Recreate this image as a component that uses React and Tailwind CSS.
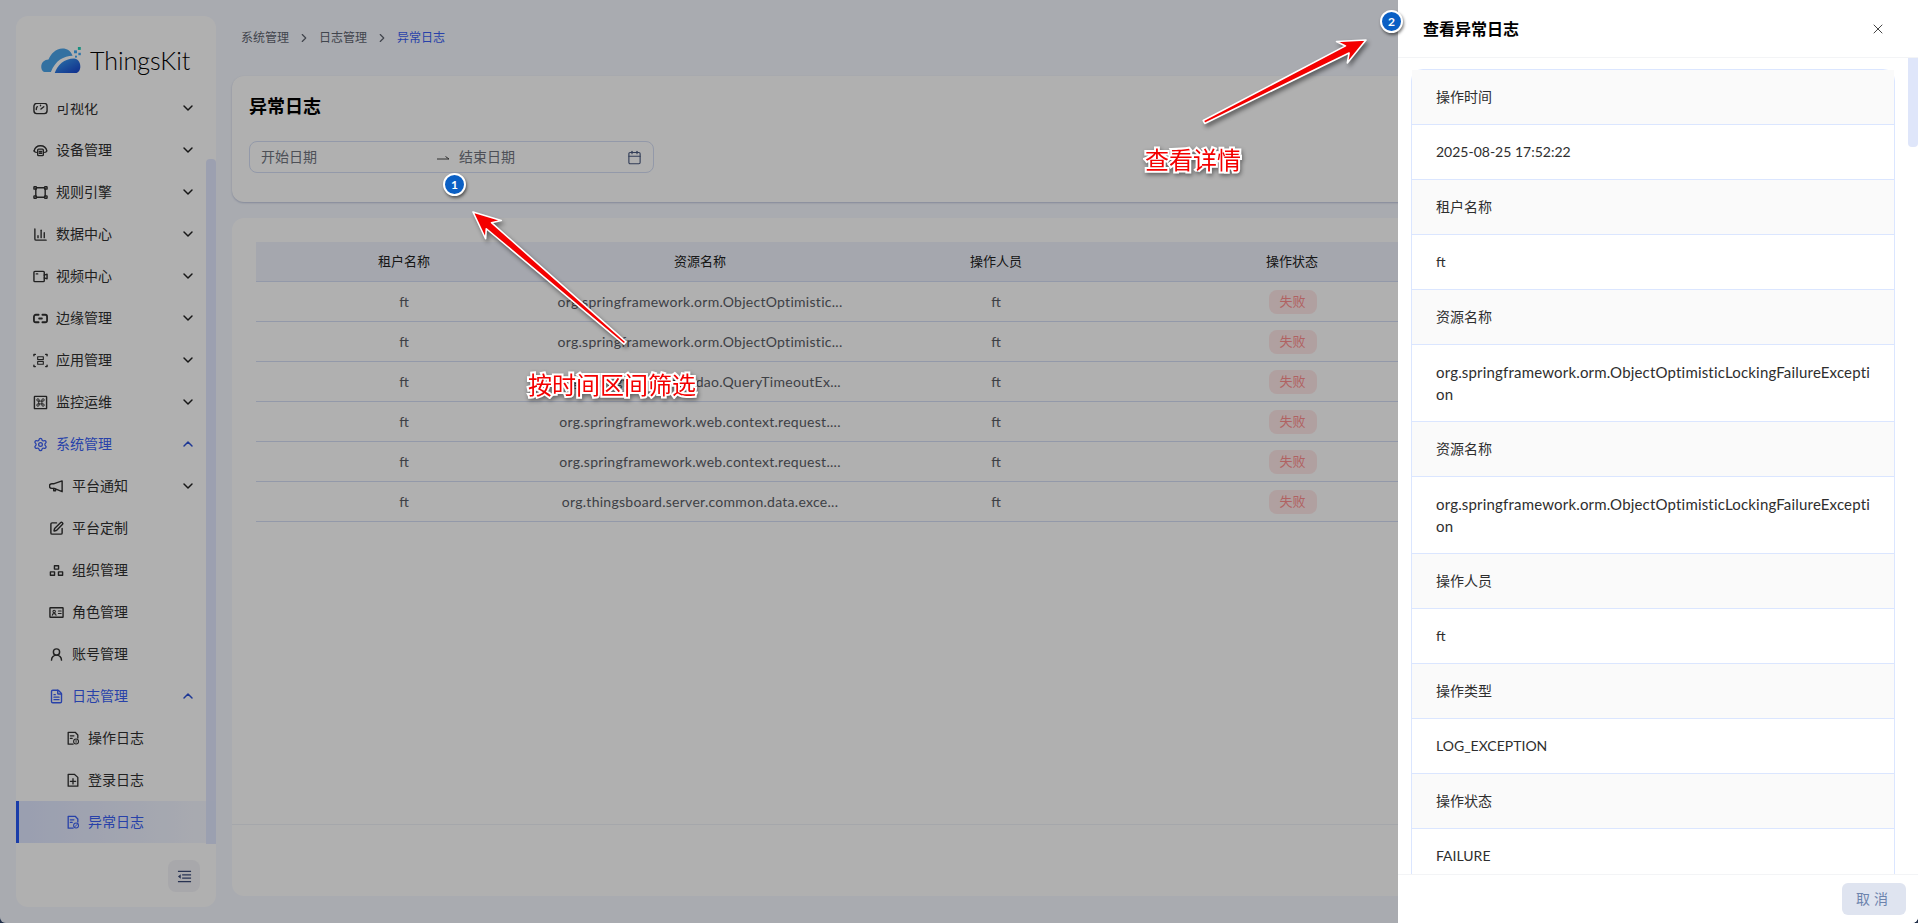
import { ChevronDown, ChevronUp, ChevronRight, Settings, SquarePen, UserRound, FileText, Calendar, X, ChartColumn } from 'lucide-react'

const FONT = "font-['Lato','Noto_Sans_CJK_SC',sans-serif]"

const Svg = ({ children, className = 'w-[15px] h-[15px]' }) => (
  <svg viewBox="0 0 16 16" fill="none" stroke="currentColor" strokeWidth="1.5" strokeLinecap="round" strokeLinejoin="round" className={className}>
    {children}
  </svg>
)

const IconGauge = () => (
  <Svg>
    <path d="M4 2.500h8a3 3 0 0 1 3 3v5a3 3 0 0 1-3 3H4a3 3 0 0 1-3-3v-5a3 3 0 0 1 3-3z" />
    <path d="M3.500 9a4.500 4.500 0 0 1 1-3M8 4.500v.6M11.500 6.200 8.500 8.600" />
  </Svg>
)
const IconDevice = () => (
  <Svg>
    <path d="M1.200 8.500C2 5 4.800 3 8 3s6 2 6.800 5.500c-.5 1-1.400 1.500-2.300 1.500" />
    <path d="M1.200 8.500c.5 1 1.400 1.500 2.300 1.500" />
    <rect x="5" y="6.500" width="6" height="7" rx="1" />
    <path d="M6.800 9h2.400M6.800 11h2.400" />
  </Svg>
)
const IconRule = () => (
  <Svg>
    <path d="M4 3h8M4 13h8M3 4v8M13 4v8" />
    <rect x="1" y="1.800" width="2.600" height="2.600" rx=".5" />
    <rect x="12.400" y="1.800" width="2.600" height="2.600" rx=".5" />
    <rect x="1" y="11.600" width="2.600" height="2.600" rx=".5" />
    <rect x="12.400" y="11.600" width="2.600" height="2.600" rx=".5" />
  </Svg>
)
const IconVideo = () => (
  <Svg>
    <rect x="1" y="2.500" width="11" height="11" rx="1" />
    <path d="M12 6.500 15 5.500v5L12 9.500M3.500 5.200h1.500" />
  </Svg>
)
const IconEdge = () => (
  <Svg>
    <path d="M6 4H3a2 2 0 0 0-2 2v4a2 2 0 0 0 2 2h3M10 4h3a2 2 0 0 1 2 2v4a2 2 0 0 1-2 2h-3M6.500 8h3" strokeWidth="1.900" />
  </Svg>
)
const IconApp = () => (
  <Svg>
    <path d="M1 3V1.500h1.500M13.500 1.500H15V3M15 13v1.500h-1.500M2.500 14.500H1V13" />
    <path d="M5 4h6v3H5zM5 9h6v3H5z" strokeWidth="1.200" />
  </Svg>
)
const IconMonitor = () => (
  <Svg>
    <rect x="1.500" y="1.500" width="13" height="13" rx=".5" />
    <path d="M6.500 6.500h3v3h-3zM6.500 6.500V5.250A1.250 1.250 0 1 0 5.250 6.500H6.500M9.500 6.500V5.250a1.250 1.250 0 1 1 1.250 1.250H9.500M6.500 9.500v1.250A1.250 1.250 0 1 1 5.250 9.500H6.500M9.500 9.500v1.250a1.250 1.250 0 1 0 1.250-1.250H9.500" strokeWidth="1" />
  </Svg>
)
const IconNotice = () => (
  <Svg>
    <path d="M14 2 5.500 5H3a2 2 0 0 0 0 5h2.500L14 13.500z" />
    <path d="M5 10v2.500h2V11" />
  </Svg>
)
const IconOrg = () => (
  <Svg>
    <rect x="5.800" y="3" width="4.400" height="3.500" />
    <rect x="1.500" y="9.500" width="4.400" height="3.500" />
    <rect x="10.100" y="9.500" width="4.400" height="3.500" />
  </Svg>
)
const IconRole = () => (
  <Svg>
    <rect x="1" y="3" width="14" height="10" rx=".5" />
    <circle cx="5.500" cy="7" r="1.300" strokeWidth="1.100" />
    <path d="M3.500 11c0-2.400 4-2.400 4 0M10 6.500h3M10 9h3" strokeWidth="1.100" />
  </Svg>
)
const FileBase = ({ children }) => (
  <Svg className="w-[14px] h-[14px]">
    <path d="M8 15H2.500V1.500h8l3 3V8" />
    {children}
  </Svg>
)
const IconLogOp = () => (
  <FileBase>
    <path d="M5 5.500h4M5 8.500h2" />
    <circle cx="11.500" cy="12" r="2.800" strokeWidth="1.200" />
    <path d="M11.500 10.800v2.200" strokeWidth="1" />
  </FileBase>
)
const IconLogLogin = () => (
  <Svg className="w-[14px] h-[14px]">
    <path d="M2.500 15V1.500h7l4 3.500V15zM8 6.500v6M5 9.500h6" />
  </Svg>
)
const IconLogErr = () => (
  <FileBase>
    <path d="M5 5.500h4M5 8.500h2" />
    <circle cx="11.500" cy="12" r="2.800" strokeWidth="1.200" />
    <path d="M9.700 13.800l3.600-3.600" strokeWidth="1" />
  </FileBase>
)
const IconCollapse = () => (
  <svg viewBox="0 0 16 16" className="w-[15px] h-[15px]" fill="none" stroke="currentColor" strokeWidth="1.300">
    <path d="M1 2.500h14M5.500 6.200H15M5.500 9.800H15M1 13.500h14" />
    <path d="M4 5.700v4.600L1 8z" fill="currentColor" stroke="none" />
  </svg>
)
const lucide15 = 'w-[15px] h-[15px]'

const MENU = [
  { label: '可视化', icon: <IconGauge />, arrow: 'down' },
  { label: '设备管理', icon: <IconDevice />, arrow: 'down' },
  { label: '规则引擎', icon: <IconRule />, arrow: 'down' },
  { label: '数据中心', icon: <ChartColumn className={lucide15} strokeWidth={2.2} />, arrow: 'down' },
  { label: '视频中心', icon: <IconVideo />, arrow: 'down' },
  { label: '边缘管理', icon: <IconEdge />, arrow: 'down' },
  { label: '应用管理', icon: <IconApp />, arrow: 'down' },
  { label: '监控运维', icon: <IconMonitor />, arrow: 'down' },
  { label: '系统管理', icon: <Settings className={lucide15} strokeWidth={2} />, arrow: 'up', open: true },
  { label: '平台通知', icon: <IconNotice />, arrow: 'down', level: 2 },
  { label: '平台定制', icon: <SquarePen className={lucide15} strokeWidth={2.3} />, level: 2 },
  { label: '组织管理', icon: <IconOrg />, level: 2 },
  { label: '角色管理', icon: <IconRole />, level: 2 },
  { label: '账号管理', icon: <UserRound className={lucide15} strokeWidth={2.3} />, level: 2 },
  { label: '日志管理', icon: <FileText className={lucide15} strokeWidth={2.2} />, arrow: 'up', open: true, level: 2 },
  { label: '操作日志', icon: <IconLogOp />, level: 3 },
  { label: '登录日志', icon: <IconLogLogin />, level: 3 },
  { label: '异常日志', icon: <IconLogErr />, level: 3, active: true },
]

const ROWS = [
  'org.springframework.orm.ObjectOptimistic...',
  'org.springframework.orm.ObjectOptimistic...',
  'org.springframework.dao.QueryTimeoutEx...',
  'org.springframework.web.context.request....',
  'org.springframework.web.context.request....',
  'org.thingsboard.server.common.data.exce...',
]

const DETAIL = [
  ['操作时间', '2025-08-25 17:52:22'],
  ['租户名称', 'ft'],
  ['资源名称', ['org.springframework.orm.ObjectOptimisticLockingFailureExcepti', 'on']],
  ['资源名称', ['org.springframework.orm.ObjectOptimisticLockingFailureExcepti', 'on']],
  ['操作人员', 'ft'],
  ['操作类型', 'LOG_EXCEPTION'],
  ['操作状态', 'FAILURE'],
]

function MenuRow({ item }) {
  const { label, icon, arrow, open, level = 1, active } = item
  const blue = open || active
  return (
    <div
      className={`h-[42px] flex items-center pr-[20px] text-sm ${level === 1 ? 'pl-[17px]' : level === 2 ? 'pl-[33px]' : 'pl-[50px]'} ${
        active ? 'border-l-[3px] !pl-[47px] border-[#2659f5] bg-gradient-to-r from-[#dfe6ff] to-[#f6f8ff]' : ''
      } ${blue ? 'text-[#3a5ff5]' : 'text-[#303030]'}`}
    >
      <span className={`flex justify-center shrink-0 ${level === 3 ? 'w-[14px] mr-[8px]' : 'w-[15px] mr-[8px]'}`}>{icon}</span>
      <span className="flex-1">{label}</span>
      {arrow === 'down' && <ChevronDown className="w-4 h-4 text-[#222]" strokeWidth={2.2} />}
      {arrow === 'up' && <ChevronUp className="w-4 h-4 text-[#2b50d8]" strokeWidth={2.2} />}
    </div>
  )
}

function Sidebar() {
  return (
    <aside className="w-[200px] shrink-0 my-4 ml-4 bg-white rounded-xl flex flex-col overflow-hidden">
      <div className="h-[87px] shrink-0 flex items-start pl-[25px] pt-[31px]">
        <svg viewBox="0 0 42 28" className="w-[41px] h-[27px] mr-[8px] shrink-0">
          <defs>
            <linearGradient id="cloudBlue" x1="0" y1="0" x2="1" y2="1">
              <stop offset="0" stopColor="#3fa8f5" />
              <stop offset="1" stopColor="#1541cc" />
            </linearGradient>
          </defs>
          <path d="M10 26H4.500C1.500 26 0 23.500 0 20.500 0 16 3.500 13 7.500 13 10 7 15 1.500 22 1.500c5 0 8.500 2.500 10.500 7.500-9 0-18 5-22.500 17z" fill="#4aa4ea" />
          <path d="M14 27c2.500-8 10-15 20-15 4 0 6.500 4 6.500 8.500 0 3.300-2 6.500-5 6.500z" fill="url(#cloudBlue)" />
          <rect x="38" y="0" width="3" height="3" fill="#21d0b8" />
          <rect x="34" y="3.500" width="3" height="3" fill="#3fa8f5" />
          <rect x="38.500" y="6" width="2.500" height="2.500" fill="#3fa8f5" />
          <rect x="35" y="9" width="2" height="2" fill="#3fa8f5" />
        </svg>
        <span className="text-[25px] leading-[26px] font-light text-black">ThingsKit</span>
      </div>
      <div className="relative flex-1 overflow-hidden">
        <div className="-mt-[16px]">
          {MENU.map((item) => (
            <MenuRow key={item.label} item={item} />
          ))}
        </div>
        <div className="absolute right-0 top-[56px] bottom-0 w-[10px] bg-[#dfe6ff] opacity-90 rounded-t" />
      </div>
      <div className="h-[63px] shrink-0 flex items-start justify-end pt-[16px] pr-[16px]">
        <div className="w-8 h-8 rounded-lg bg-[#f4f4f8] flex items-center justify-center text-[#3a4a78]">
          <IconCollapse />
        </div>
      </div>
    </aside>
  )
}

function Main() {
  return (
    <main className="flex-1 min-w-0 flex flex-col px-4 pb-[27px]">
      <div className="h-[76px] shrink-0 flex items-center pl-[9px] text-xs text-[#5f6470]">
        系统管理
        <ChevronRight className="w-[14px] h-[14px] mx-[8px]" />
        日志管理
        <ChevronRight className="w-[14px] h-[14px] mx-[8px]" />
        <span className="text-[#3a5ff5]">异常日志</span>
      </div>

      <section className="h-[126px] shrink-0 bg-white rounded-xl px-[17px] pt-4 shadow-[0_1px_2px_rgba(30,50,120,0.25)]">
        <h1 className="text-lg leading-7 font-semibold text-black">异常日志</h1>
        <div className="mt-[21px] w-[405px] h-8 rounded-lg border border-[#d5def5] flex items-center pl-[11px] pr-[11px] text-sm text-[#71757f]">
          <span className="w-[176px]">开始日期</span>
          <svg viewBox="0 0 12 6" className="w-3 h-[6px] mr-[10px] text-[#444]" fill="none" stroke="currentColor" strokeWidth="1">
            <path d="M0 5h12L8.500 2.500" />
          </svg>
          <span className="flex-1">结束日期</span>
          <Calendar className="w-[15px] h-[15px] text-[#4a5a80]" strokeWidth={1.8} />
        </div>
      </section>

      <section className="flex-1 mt-4 bg-white rounded-xl flex flex-col">
        <div className="px-6 pt-6 text-[13px]">
          <div className="grid grid-cols-[repeat(5,296px)] h-10 items-center text-center bg-[#eff2fc] border-b border-[#d5def5] text-[#222]">
            <span>租户名称</span>
            <span>资源名称</span>
            <span>操作人员</span>
            <span>操作状态</span>
            <span />
          </div>
          {ROWS.map((name, i) => (
            <div key={i} className="grid grid-cols-[repeat(5,296px)] h-10 items-center text-center border-b border-[#d5def5] text-[#5a5d66] text-sm">
              <span>ft</span>
              <span className="tracking-[0.28px]">{name}</span>
              <span>ft</span>
              <span>
                <span className="inline-flex items-center justify-center w-12 h-6 ml-[1px] rounded-lg bg-[#ffe8e8] text-[#ff8f8f] text-[13px]">失败</span>
              </span>
              <span />
            </div>
          ))}
        </div>
        <div className="mt-auto h-[72px] border-t border-[#f0f2f8]" />
      </section>
    </main>
  )
}

function Drawer() {
  return (
    <aside className="absolute right-0 inset-y-0 w-[520px] bg-white flex flex-col">
      <header className="h-[58px] shrink-0 flex items-center justify-between pl-[25px] pr-[32px] border-b border-[#f3f4f6]">
        <h2 className="text-base font-semibold text-black">查看异常日志</h2>
        <X className="w-4 h-4 text-[#444]" strokeWidth={1.5} />
      </header>
      <div className="relative flex-1 overflow-hidden pl-[13px] pr-[23px] pt-[11px]">
        <div className="rounded-t-xl border border-[#dbe6ff] text-sm text-[#2e2e2e]">
          {DETAIL.map(([label, value], i) => (
            <div key={i}>
              <div className="px-[24px] py-4 leading-[22px] bg-[#fafafa] rounded-t-[inherit] border-b border-[#dbe6ff]">{label}</div>
              <div className="px-[24px] py-4 leading-[22px] border-b border-[#dbe6ff]">
                {Array.isArray(value) ? (
                  <span className="block text-[15px] leading-[22px] tracking-[0.18px]">
                    {value[0]}
                    <br />
                    {value[1]}
                  </span>
                ) : (
                  value
                )}
              </div>
            </div>
          ))}
        </div>
        <div className="absolute right-0 top-0 w-[10px] h-[89px] bg-[#dfe6fa] rounded-b" />
      </div>
      <footer className="h-[49px] shrink-0 flex items-start justify-end pt-[8px] pr-[12px] border-t border-[#f3f4f6] bg-white">
        <button className="w-16 h-8 rounded-md bg-[#dfe4f0] text-[#6c83ad] text-sm tracking-[4px]">取消</button>
      </footer>
    </aside>
  )
}

// red callout arrow from the screenshot's annotation layer
function Arrow({ x1, y1, x2, y2 }) {
  const len = Math.hypot(x2 - x1, y2 - y1)
  const dx = (x2 - x1) / len
  const dy = (y2 - y1) / len
  const nx = -dy
  const ny = dx
  const at = (back, side) => `${x2 - dx * back + nx * side},${y2 - dy * back + ny * side}`
  const points = [
    at(0, 0),
    at(27, 12),
    at(21, 4),
    at(len, 1.6),
    at(len, -1.6),
    at(21, -4),
    at(27, -12),
  ].join(' ')
  return <polygon points={points} fill="#f40000" stroke="#fff" strokeWidth="1.6" strokeLinejoin="round" />
}

const Badge = ({ n, className }) => (
  <div className={`absolute w-[23px] h-[23px] rounded-full bg-[#0a5fc4] border-2 border-white shadow-[1px_2px_3px_rgba(0,0,0,0.5)] flex items-center justify-center text-white text-xs font-bold ${className}`}>
    {n}
  </div>
)

const calloutText = "absolute text-2xl leading-6 font-normal text-[#f40000] whitespace-nowrap [-webkit-text-stroke:4px_white] [paint-order:stroke_fill] drop-shadow-[1px_2px_2px_rgba(0,0,0,0.45)]"

export default function App() {
  return (
    <div className={`h-screen bg-[#22304a] overflow-hidden ${FONT}`}>
      <div className="relative h-full rounded-b-[6px] overflow-hidden bg-[#f5f8ff]">
        <div className="h-full flex">
          <Sidebar />
          <Main />
        </div>
        <div className="absolute inset-0 bg-[rgba(0,0,0,0.31)]" />
        <Drawer />
        <svg className="absolute inset-0 w-full h-full pointer-events-none drop-shadow-[2px_3px_2px_rgba(0,0,0,0.45)]">
          <Arrow x1={625} y1={343} x2={473} y2={212} />
          <Arrow x1={1204} y1={122} x2={1366} y2={40} />
        </svg>
        <Badge n="1" className="left-[443px] top-[173px]" />
        <Badge n="2" className="left-[1380px] top-[10px]" />
        <div className={`${calloutText} left-[528px] top-[373px]`}>按时间区间筛选</div>
        <div className={`${calloutText} left-[1145px] top-[148px]`}>查看详情</div>
      </div>
    </div>
  )
}
